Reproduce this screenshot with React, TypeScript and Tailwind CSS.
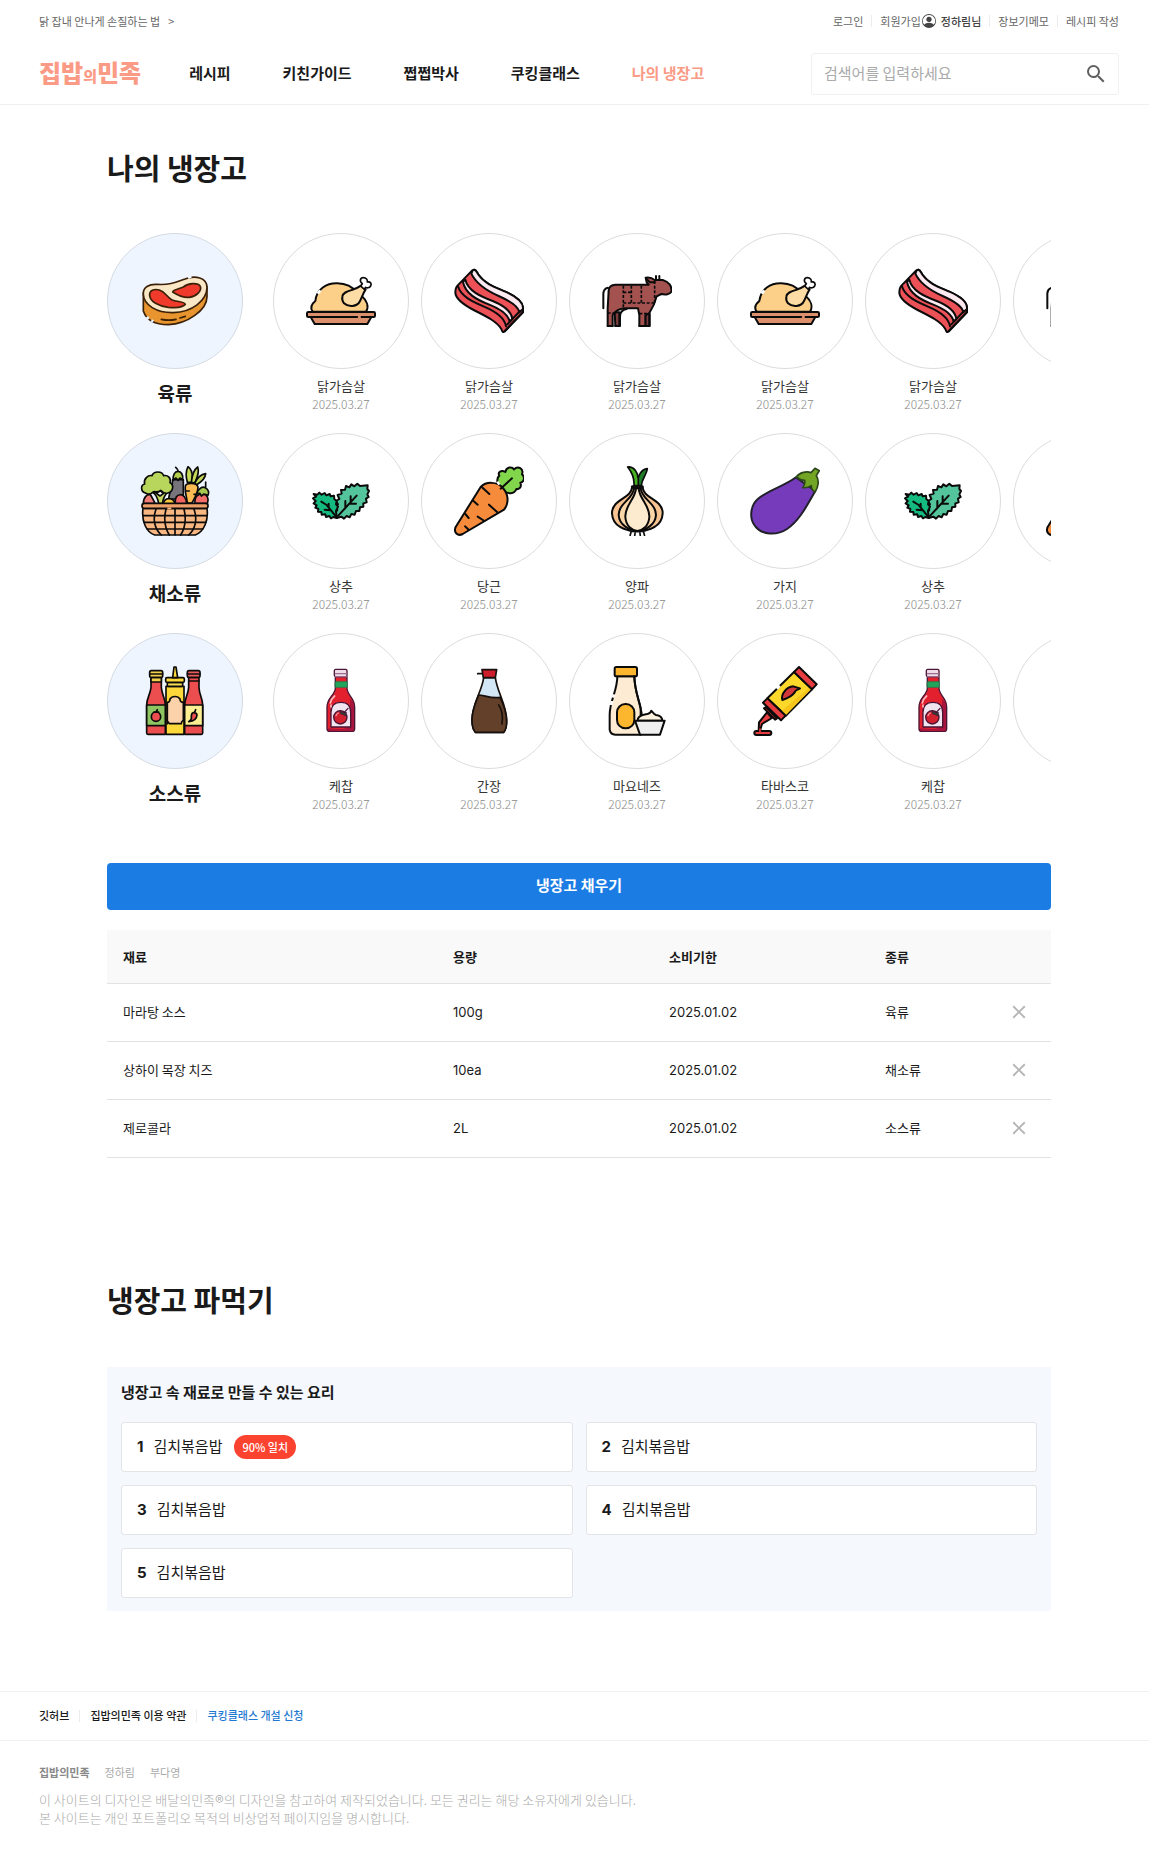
import React from "react";
import { MdSearch, MdClose } from "react-icons/md";
import { BsPersonCircle } from "react-icons/bs";

type ArtProps = { box: string; children: React.ReactNode; stroke?: string; width?: number };

function Art({ box, children, stroke = "#0b0b0b", width = 6 }: ArtProps) {
  return (
    <svg
      className="size-[70px] shrink-0"
      viewBox={box}
      fill="none"
      stroke={stroke}
      strokeWidth={width}
      strokeLinecap="round"
      strokeLinejoin="round"
      aria-hidden="true"
    >
      {children}
    </svg>
  );
}

const Steak = () => (
  <Art box="120 123 210 210" stroke="#3b2108" width={5}>
    <path fill="#e9952f" d="M130 205V258C140 288 172 299 205 299C262 297 321 255 321 215V185Z" />
    <path fill="#fae7c6" d="M130 208C128 186 148 177 170 178C212 181 232 170 255 162C285 150 321 158 321 187C321 227 275 262 220 263C170 264 131 240 130 208Z" />
    <path fill="#ef3a2c" d="M149 212C147 196 163 191 178 195C195 200 200 215 215 224C230 231 254 229 256 238C250 247 225 249 205 247C175 243 151 230 149 212Z" />
    <path fill="#ef3a2c" d="M218 201C220 193 238 192 250 186C265 174 294 172 301 184C306 197 290 214 268 217C247 219 232 210 218 201Z" />
    <path d="M184 283Q206 288 228 283M240 279L256 274" />
    <path stroke="#eff5fe" strokeWidth={8} strokeLinecap="butt" d="M264 158L274 154M140 276L146 282M154 286L160 289" />
  </Art>
);

const Chicken = () => (
  <Art box="618 123 210 210">
    <path fill="#fdd08a" d="M638 260C628 246 636 236 646 228C650 192 680 174 712 175C742 176 758 186 770 202L785 213C800 226 808 244 798 260Z" />
    <path fill="#fedca6" d="M727 215C728 203 742 199 755 195C767 191 775 188 783 182L797 193C789 205 786 216 780 228C772 246 745 247 732 235C726 228 726 221 727 215Z" />
    <path fill="#fff" strokeWidth={5} d="M782 183L787 176C777 169 781 158 790 158C799 158 803 164 802 171C811 169 816 176 812 183C808 190 800 189 797 187L793 193Z" />
    <path fill="#dd906c" d="M632 276L644 297H802L814 276Z" />
    <rect fill="#dd906c" x="621" y="261" width="204" height="15" rx="4" />
    <path stroke="#dd906c" d="M776 276H780" />
    <path stroke="#fff" strokeWidth={9} strokeLinecap="butt" d="M653 206L661 196" />
  </Art>
);

const Bacon = () => (
  <Art box="116 123 210 210">
    <path fill="#ec5158" d="M177 134C184 136 184 142 190 150C208 176 240 187 270 200C300 213 325 230 323 252V262L268 320C262 323 260 318 258 312C245 290 215 275 175 255C150 242 121 225 120 203C120 192 122 186 127 181L170 137Z" />
    <path fill="#fdeaf0" d="M177 134C184 136 184 142 190 150C208 176 240 187 270 200C300 213 325 230 323 252L312 262C308 240 275 224 250 213C218 199 184 180 168 146L172 136Z" />
    <path fill="#fdeaf0" d="M150 164C158 198 196 214 232 228C262 240 288 257 291 282L283 290C278 265 250 250 222 239C184 224 150 206 143 171Z" />
    <path d="M128 184C136 214 172 230 206 245C242 260 268 278 272 304M322 262L268 318M314 258L276 298" />
  </Art>
);

const Cow = () => (
  <Art box="560 123 210 210">
    <path fill="#7d3d3e" d="M598 262H612V303H600ZM690 262H702V303H690Z" />
    <path fill="#a35250" d="M580 196Q582 180 600 179H700L694 172L691 158Q706 155 718 165H742C760 170 771 184 768 200C765 208 750 210 738 207L724 214C718 238 710 252 702 264L690 272V303H672V270L668 250H632C616 250 600 258 592 270V303H577V250Z" />
    <path d="M614 303V275C614 262 622 254 634 252M577 303H592M600 303H614M672 303H703V268" />
    <path d="M578 188Q565 191 564 205V250M722 153V163M732 153V162M692 160L704 172L718 172" />
    <path strokeLinecap="butt" strokeWidth={5} strokeDasharray="9 5" d="M624 182V250M648 182V234M678 182V234M624 202H648M624 234H718M718 168V234M577 264H600M672 266H702" />
  </Art>
);

const Basket = () => (
  <Art box="120 123 210 210" width={5}>
    <path fill="#c3d957" d="M262 172C256 150 258 136 264 125C274 132 279 150 276 172Z" />
    <path fill="#c3d957" d="M274 172C276 150 282 134 293 126C298 140 292 158 284 174Z" />
    <path fill="#c3d957" d="M284 175C292 158 304 148 317 146C316 160 302 172 290 179Z" />
    <path fill="#fdbb53" d="M256 184C258 172 290 172 294 186C294 205 282 222 276 234H262C260 215 254 200 256 184Z" />
    <path d="M258 198H268M282 208H290" />
    <path fill="#77747b" d="M218 164H250V222H206C206 205 218 190 218 164Z" />
    <path fill="#b4ce4d" d="M220 165C218 150 224 139 234 139C244 139 250 150 248 164L240 159L234 166L228 159Z" />
    <path d="M234 139C234 132 230 130 227 127" />
    <path fill="#f17f79" d="M130 236C130 216 142 206 152 210L166 236Z" />
    <path fill="#f56f6a" d="M285 236C282 214 296 206 308 207C322 208 328 222 322 236Z" />
    <path fill="#a6ca52" d="M290 206C296 188 308 184 316 188C326 193 328 204 324 211L312 207L304 213L300 205Z" />
    <path d="M317 186V171" />
    <path fill="#c5d85e" d="M158 202C170 210 174 222 176 236H188C188 220 194 212 202 202Z" />
    <path fill="#b8d65b" d="M136 204C122 200 121 180 134 177C130 162 144 149 156 152C162 137 186 138 191 152C204 149 214 160 210 173C222 178 221 200 204 204C194 208 188 202 182 196C172 206 164 196 158 202C152 208 142 208 136 204Z" />
    <path fill="#fff" d="M168 204L182 198L190 206L180 213Z" />
    <path fill="#fac83e" d="M190 238C192 216 220 214 226 238Z" />
    <path fill="#f06562" d="M226 237C220 202 258 198 260 236Z" />
    <path fill="#f8b681" d="M129 250C124 287 138 322 164 330H286C312 320 326 287 321 250Z" />
    <path d="M130 272H320M132 292H318M142 312H308M225 252V330M198 252C190 285 198 314 208 330M252 252C260 285 252 314 242 330M168 252C156 286 166 314 184 330M282 252C294 286 284 314 266 330" />
    <rect fill="#ef9f68" x="126" y="235" width="198" height="15" rx="7" />
    <path stroke="#f8b681" d="M204 250H212" />
  </Art>
);

const Lettuce = () => (
  <Art box="618 123 210 210">
    <path fill="#53c49b" d="M710 279L706 262L712 255L706 246L714 238L708 228L718 222L713 210L725 206L723 195L735 194L738 183L748 187L754 178L763 184L772 176L780 183L803 181L802 192L807 198L802 208L806 216L798 221L800 232L790 235L790 245L780 247L778 258L768 258L764 269L754 267L749 277L740 273L732 281L724 275Z" />
    <path fill="#14ba80" d="M710 279L700 276L693 280L688 273L678 276L676 268L665 269L664 261L654 260L655 252L646 248L650 241L641 235L647 228L639 220L648 215L641 207L652 209L658 203L665 209L674 204L679 211L689 207L692 214L702 212L703 222L710 228L708 238L714 245L708 258Z" />
    <path d="M710 277L680 240L664 230M686 248V236M692 256L674 254M710 277L770 212M736 250V228M748 236H768M752 230V214" />
  </Art>
);

const Carrot = () => (
  <Art box="116 123 210 210">
    <path fill="#82d64c" d="M252 188C242 172 246 156 252 152C246 141 258 134 270 141C273 125 290 124 296 133C308 121 326 131 320 148C330 156 326 172 315 173C320 186 312 194 303 192C297 208 278 208 264 198Z" />
    <path fill="#f68b3c" d="M196 186C214 167 246 172 260 186C280 206 282 234 266 254L142 327C127 335 114 322 121 306Z" />
    <path d="M256 191L290 160M200 187L222 207M172 226L187 239M221 239L246 262M150 267L160 279M187 275L207 288M149 304L160 314" />
    <path stroke="#fff" strokeWidth={7} strokeLinecap="butt" d="M246 170L252 179" />
  </Art>
);

const Onion = () => (
  <Art box="560 123 210 210">
    <path fill="#1f7d29" strokeWidth={5} d="M668 182C664 150 680 133 696 131C694 150 680 160 678 182Z" />
    <path fill="#45b020" strokeWidth={5} d="M656 182C658 157 650 142 637 126C656 124 668 142 669 162V182Z" />
    <path fill="#f7c491" d="M650 188C648 220 590 222 590 265C592 305 630 317 666 318C702 317 740 305 742 265C742 222 684 220 682 188Z" />
    <path fill="#fbd6a9" d="M656 190C654 222 610 234 610 270C612 300 640 315 666 318C692 315 720 300 722 270C722 234 678 222 676 190Z" />
    <path fill="#fdebcf" d="M662 190C660 222 628 242 630 276C632 304 650 316 666 318C682 316 700 304 702 276C704 242 672 222 670 190Z" />
    <path strokeWidth={9} d="M651 185H681" />
    <path strokeLinecap="butt" strokeWidth={5} d="M648 318L644 333M660 318L658 333M673 318L675 333M684 318L688 333M640 316Q666 324 692 316" />
  </Art>
);

const Eggplant = () => (
  <Art box="1004 123 210 210" stroke="#20202a">
    <path fill="#763bbb" d="M1142 157C1110 182 1060 195 1030 220C1005 240 1000 280 1020 304C1040 331 1085 332 1115 312C1155 285 1178 235 1200 198Z" />
    <path fill="#72a524" stroke="#2c471c" strokeWidth={5} d="M1143 156C1152 142 1175 137 1187 143L1199 130L1212 137L1203 152C1212 165 1210 185 1199 201C1192 197 1188 190 1188 182C1182 186 1172 189 1162 188C1168 180 1170 174 1168 166C1160 166 1150 162 1143 156Z" />
  </Art>
);

const Sauces = () => (
  <Art box="120 123 210 210" width={5}>
    <path fill="#ec4d4f" d="M153 157V188C150 210 140 220 140 240V324Q140 328 144 328H196V240C196 220 186 210 184 188V157Z" />
    <path fill="#ec4d4f" d="M266 157V188C264 210 254 220 254 240V328H304Q308 328 308 324V240C308 220 298 210 297 188V157Z" />
    <path fill="#f0cf4a" d="M153 157V171H184V157Z" />
    <path fill="#8fc463" d="M140 240H196V302H140Z" />
    <path fill="#fcee92" d="M254 240H308V302H254Z" />
    <rect fill="#f0cf4a" x="149" y="137" width="39" height="20" rx="5" />
    <path d="M149 147H188M266 168H297" />
    <rect fill="#ec5c5c" x="262" y="137" width="38" height="20" rx="5" />
    <path d="M262 147H300" />
    <circle fill="#ec4d4f" cx="168" cy="275" r="14" />
    <path d="M162 261H176M169 260L172 254" />
    <path fill="#ec4d4f" d="M279 263Q290 262 291 270Q290 288 266 290Q276 284 274 274Q274 265 279 263ZM284 262L287 254" />
    <path fill="#fcd83b" d="M198 184H252V328H198Z" />
    <path fill="#fcd2aa" d="M202 296V232C208 232 210 228 210 222C216 212 234 212 240 222C240 228 244 232 250 232V286C246 288 244 292 244 296H208C206 292 202 288 200 286" />
    <rect fill="#f5dd52" x="202" y="172" width="46" height="12" rx="3" />
    <rect fill="#fcd83b" x="197" y="158" width="56" height="14" rx="4" />
    <path fill="#fcd83b" d="M218 158L222 126H228L233 158Z" />
  </Art>
);

const Ketchup = () => (
  <Art box="618 123 210 210" stroke="#4b1535" width={4}>
    <path fill="#e3212e" d="M706 155V190C704 212 681 218 681 246V311Q681 319 689 319H756Q764 319 764 311V246C764 218 742 212 741 190V155Z" />
    <path fill="#a7143c" stroke="none" d="M750 222Q762 232 762 246V311Q762 317 756 317H689Q684 317 683 310Q745 318 750 300Z" />
    <rect fill="#f0dce8" x="703" y="133" width="38" height="22" rx="4" />
    <path stroke="#9a6c8d" d="M706 146H739M705 155H740" />
    <rect fill="#21a45b" stroke="#1b7a4b" strokeWidth={2} x="706" y="170" width="36" height="17" />
    <path fill="#f1e5ef" d="M693 306V262C693 242 705 232 723 232C741 232 752 242 752 262V306Z" />
    <circle fill="#d3202d" cx="721" cy="277" r="20" />
    <path fill="#1e4a32" strokeWidth={2} d="M720 258L730 264L740 262L737 268L740 274L730 269L722 266Z" />
    <path d="M732 263L744 250" />
    <path stroke="#fbb6bb" strokeWidth={5} d="M704 213Q694 221 691 234M693 246V240" />
    <path stroke="#f49a9c" strokeWidth={4} d="M708 272Q710 266 715 264" />
  </Art>
);

const Soy = () => (
  <Art box="116 123 210 210" stroke="#17100d" width={5}>
    <path fill="#d3e6f6" d="M205 158C200 200 170 235 170 285Q170 310 180 322H265Q274 310 274 285C272 235 245 200 240 158Z" />
    <path fill="#62402a" d="M190 210C205 210 230 222 254 217C268 245 274 265 274 290Q274 312 265 322H180Q170 310 170 285C170 255 180 235 190 210Z" />
    <path fill="#cf1c2b" d="M200 134H244L240 158H204ZM187 146H201" />
    <path d="M250 240Q265 260 260 297" />
  </Art>
);

const Mayo = () => (
  <Art box="560 123 210 210">
    <path fill="#fdecd3" d="M606 154C606 200 583 225 583 270V314Q585 329 600 329H676V250C672 225 658 200 657 154Z" />
    <rect fill="#fdb72f" x="598" y="126" width="67" height="28" rx="5" />
    <path stroke="#fff" strokeWidth={9} strokeLinecap="butt" d="M596 208L593 218M590 228L587 240" />
    <rect fill="#fdb72f" x="605" y="237" width="52" height="73" rx="25" />
    <path fill="#fdf2e0" d="M667 287C666 276 680 270 692 268C700 267 706 263 708 257C714 262 713 267 722 270C735 272 741 278 741 287Z" />
    <path fill="#efefef" d="M659 287H748L734 329H674Z" />
    <path d="M657 154C658 200 672 225 679 266" />
  </Art>
);

const Tabasco = () => (
  <Art box="1004 123 210 210">
    <path fill="#fdd82b" d="M1136 141L1190 193L1112 272L1056 220Z" />
    <path fill="#f5c51b" stroke="none" d="M1180 190L1187 193L1112 270L1098 258Z" />
    <path fill="#e63b3f" d="M1151 126L1204 178L1190 193L1136 141ZM1056 220L1111 272L1097 286L1043 233Z" />
    <path fill="#c92f38" d="M1052 246L1085 280L1079 284L1046 250Z" />
    <path fill="#e63b3f" d="M1055 262L1070 279L1040 297L1034 318L1030 318L1031 292Z" />
    <rect fill="#e63b3f" x="1017" y="318" width="51" height="12" rx="6" />
    <path stroke="#e63b3f" strokeWidth={5} d="M1034 312V324" />
    <path fill="#d2393b" d="M1101 225C1096 206 1114 186 1134 184L1154 190C1146 196 1142 192 1138 202C1130 214 1116 220 1101 225Z" />
    <path stroke="#fff" strokeWidth={9} strokeLinecap="butt" d="M1084 191L1093 182" />
  </Art>
);

type Item = { name: string; icon: React.ComponentType };
type Group = { name: string; icon: React.ComponentType; items: Item[] };

const EXPIRY = "2025.03.27";

const GROUPS: Group[] = [
  {
    name: "육류",
    icon: Steak,
    items: [
      { name: "닭가슴살", icon: Chicken },
      { name: "닭가슴살", icon: Bacon },
      { name: "닭가슴살", icon: Cow },
      { name: "닭가슴살", icon: Chicken },
      { name: "닭가슴살", icon: Bacon },
      { name: "닭가슴살", icon: Cow },
    ],
  },
  {
    name: "채소류",
    icon: Basket,
    items: [
      { name: "상추", icon: Lettuce },
      { name: "당근", icon: Carrot },
      { name: "양파", icon: Onion },
      { name: "가지", icon: Eggplant },
      { name: "상추", icon: Lettuce },
      { name: "당근", icon: Carrot },
    ],
  },
  {
    name: "소스류",
    icon: Sauces,
    items: [
      { name: "케찹", icon: Ketchup },
      { name: "간장", icon: Soy },
      { name: "마요네즈", icon: Mayo },
      { name: "타바스코", icon: Tabasco },
      { name: "케찹", icon: Ketchup },
      { name: "간장", icon: Soy },
    ],
  },
];

const STOCK = [
  { name: "마라탕 소스", amount: "100g", date: "2025.01.02", kind: "육류" },
  { name: "상하이 목장 치즈", amount: "10ea", date: "2025.01.02", kind: "채소류" },
  { name: "제로콜라", amount: "2L", date: "2025.01.02", kind: "소스류" },
];

const RECIPES = [
  { name: "김치볶음밥", match: "90% 일치" },
  { name: "김치볶음밥" },
  { name: "김치볶음밥" },
  { name: "김치볶음밥" },
  { name: "김치볶음밥" },
];

const Bar = () => <span className="mx-2 h-3 w-px bg-[#ececec]" aria-hidden="true" />;

function Header() {
  return (
    <header className="border-b border-[#f0f0f0] pr-[30px] pl-[39px]">
      <div className="flex h-11 items-center justify-between pb-[2px] text-[11px] text-[#666]">
        <a href="#tip" className="flex gap-2">
          닭 잡내 안나게 손질하는 법 <span>&gt;</span>
        </a>
        <div className="flex items-center">
          <a href="#login">로그인</a>
          <Bar />
          <a href="#join">회원가입</a>
          <a href="#me" className="ml-px flex items-center gap-[5px] font-medium text-[#444]">
            <BsPersonCircle className="size-[14px]" aria-hidden="true" />
            정하림님
          </a>
          <Bar />
          <a href="#memo">장보기메모</a>
          <Bar />
          <a href="#write">레시피 작성</a>
        </div>
      </div>
      <div className="flex h-[60px] items-center pb-[1px]">
        <a href="#home" className="text-[24px] leading-6 font-black whitespace-nowrap text-[#fb9a85]">
          집밥<span className="text-[15px]">의</span>민족
        </a>
        <nav className="ml-[48px] flex gap-[52px] text-[15px] font-bold whitespace-nowrap text-[#1a1a1a]">
          <a href="#recipes">레시피</a>
          <a href="#guide">키친가이드</a>
          <a href="#doctor">쩝쩝박사</a>
          <a href="#class">쿠킹클래스</a>
          <a href="#fridge" className="text-[#fb9a85]">나의 냉장고</a>
        </nav>
        <form
          className="ml-auto flex h-[42px] w-[308px] items-center rounded-[3px] border border-[#f0f0f0] pr-[10px] pl-3"
          onSubmit={(e) => e.preventDefault()}
        >
          <input
            type="search"
            aria-label="검색어"
            placeholder="검색어를 입력하세요"
            className="min-w-0 flex-1 text-[15px] outline-none placeholder:text-[#aaa]"
          />
          <button type="submit" aria-label="검색" className="text-[#606060]">
            <MdSearch className="size-6" />
          </button>
        </form>
      </div>
    </header>
  );
}

function GroupRow({ group }: { group: Group }) {
  const GroupIcon = group.icon;
  return (
    <div className="flex h-[200px] gap-[30px]">
      <div className="w-[136px] shrink-0 text-center">
        <div className="flex size-[136px] items-center justify-center rounded-full border border-[#d5dbe3] bg-[#eff5fe]">
          <GroupIcon />
        </div>
        <h2 className="mt-[11px] text-[19px] leading-[26px] font-bold">{group.name}</h2>
      </div>
      <ul className="flex min-w-0 flex-1 gap-3 overflow-x-auto overflow-y-hidden [scrollbar-width:none]">
        {group.items.map((item, i) => {
          const Icon = item.icon;
          return (
            <li key={i} className="w-[136px] shrink-0 text-center">
              <div className="flex size-[136px] items-center justify-center rounded-full border border-[#dcdcdc]">
                <Icon />
              </div>
              <p className="mt-2 text-[13px] leading-[18px] text-[#333]">{item.name}</p>
              <p className="text-xs leading-[18px] font-light text-[#888]">{EXPIRY}</p>
            </li>
          );
        })}
      </ul>
    </div>
  );
}

function StockTable() {
  return (
    <table className="mt-5 w-full table-fixed text-left text-[13px]">
      <thead>
        <tr className="h-[53px] border-b border-[#e2e2e2] bg-[#f9f9f9]">
          <th className="px-4 font-bold">재료</th>
          <th className="w-[216px] px-4 font-bold">용량</th>
          <th className="w-[216px] px-4 font-bold">소비기한</th>
          <th className="w-[118px] px-4 font-bold">종류</th>
          <th className="w-16" aria-label="삭제" />
        </tr>
      </thead>
      <tbody>
        {STOCK.map((row) => (
          <tr key={row.name} className="h-[58px] border-b border-[#e2e2e2]">
            <td className="px-4">{row.name}</td>
            <td className="px-4">
              <span className="font-['Inter']">{row.amount}</span>
            </td>
            <td className="px-4">
              <span className="font-['Inter']">{row.date}</span>
            </td>
            <td className="px-4">{row.kind}</td>
            <td className="px-[21px] align-middle">
              <button type="button" aria-label={`${row.name} 삭제`} className="flex text-[#b5b5b5]">
                <MdClose className="size-[22px]" />
              </button>
            </td>
          </tr>
        ))}
      </tbody>
    </table>
  );
}

function Recipes() {
  return (
    <section className="bg-[#f5f8fd] px-[14px] pt-[14px] pb-[13px]">
      <h3 className="text-[15px] leading-[22px] font-bold">냉장고 속 재료로 만들 수 있는 요리</h3>
      <ol className="mt-[19px] grid grid-cols-2 gap-x-[13px] gap-y-[13px]">
        {RECIPES.map((r, i) => (
          <li key={i}>
            <a
              href="#recipe"
              className="flex h-[50px] items-center rounded-[3px] border border-[#e2e4e8] bg-white px-[15px] text-[15px]"
            >
              <span>
                <b className="mr-[10px] font-['Inter'] font-bold">{i + 1}</b>
                {r.name}
              </span>
              {r.match && (
                <span className="ml-3 rounded-full bg-[#fb4330] px-2 text-[11px] leading-6 font-medium text-white">
                  {r.match}
                </span>
              )}
            </a>
          </li>
        ))}
      </ol>
    </section>
  );
}

function Footer() {
  return (
    <footer className="mt-20 text-[11px]">
      <div className="flex h-[50px] items-center border-y border-[#f0f0f0] pl-[39px] font-medium">
        <a href="#github">깃허브</a>
        <span className="mx-[10px] h-3 w-px bg-[#ececec]" />
        <a href="#terms">집밥의민족 이용 약관</a>
        <span className="mx-[10px] h-3 w-px bg-[#ececec]" />
        <a href="#apply" className="text-[#1f78d1]">쿠킹클래스 개설 신청</a>
      </div>
      <div className="pt-[23px] pb-[27px] pl-[39px] text-[#aaa]">
        <p className="flex gap-[15px] leading-4">
          <b className="text-[#888]">집밥의민족</b>
          <span>정하림</span>
          <span>부다영</span>
        </p>
        <p className="mt-[11px] text-[13px] leading-[18px] font-light">
          이 사이트의 디자인은 배달의민족<span className="font-['Inter']">®</span>의 디자인을 참고하여 제작되었습니다. 모든 권리는 해당 소유자에게 있습니다.
          <br />본 사이트는 개인 포트폴리오 목적의 비상업적 페이지임을 명시합니다.
        </p>
      </div>
    </footer>
  );
}

export default function App() {
  return (
    <div className="bg-white font-['Noto_Sans_CJK_KR','Inter',sans-serif] text-[#1a1a1a]">
      <Header />
      <main className="pt-[42px] pr-[98px] pl-[107px]">
        <h1 className="mb-[46px] text-[29px] leading-10 font-bold">나의 냉장고</h1>
        {GROUPS.map((g) => (
          <GroupRow key={g.name} group={g} />
        ))}
        <button
          type="button"
          className="mt-[30px] block h-[47px] w-full rounded-[4px] bg-[#1b7ce4] pb-[2px] text-[15px] font-bold text-white"
        >
          냉장고 채우기
        </button>
        <StockTable />
        <h1 className="mt-[121px] mb-12 text-[29px] leading-10 font-bold">냉장고 파먹기</h1>
        <Recipes />
      </main>
      <Footer />
    </div>
  );
}
